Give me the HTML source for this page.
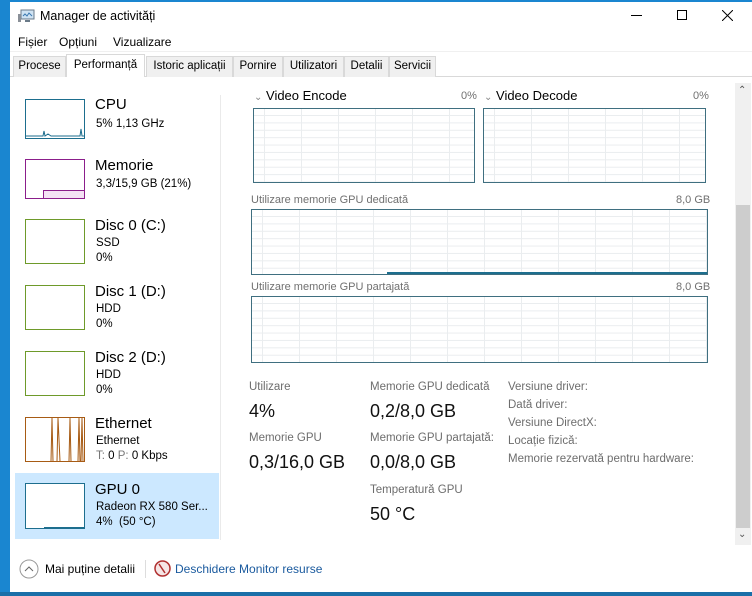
<!DOCTYPE html>
<html><head><meta charset="utf-8"><style>
*{margin:0;padding:0;box-sizing:border-box}
body{width:752px;height:596px;overflow:hidden;background:#1a86d0;font-family:"Liberation Sans",sans-serif;color:#000;position:relative}
.win{position:absolute;left:10px;top:2px;width:742px;height:590px;background:#fff}
.a{position:absolute;white-space:nowrap}
.tab{position:absolute;top:56px;height:21px;background:#f0f0f0;border:1px solid #d9d9d9;border-bottom:none;font-size:11.5px;line-height:19px;text-align:center}
.th{position:absolute;left:25px;width:60px;background:#fff}
.t1{position:absolute;left:95px;font-size:15px}
.t2{position:absolute;left:96px;font-size:11.5px;line-height:16px}
.g{position:absolute;border:1px solid #3f6f80;background-color:#fff;
background-image:linear-gradient(90deg,#eaedef 1px,transparent 1px),linear-gradient(#eaedef 1px,transparent 1px);
background-size:37px 100%,100% 7.4px;background-position:10px 0,0 6px}
.lbl{position:absolute;font-size:11px;color:#707070}
.sl{position:absolute;font-size:11.5px;color:#6d6d6d}
.sv{position:absolute;font-size:18px;color:#111}
</style></head><body>
<div class="win"></div>
<svg class="a" style="left:18px;top:9px" width="17" height="14" viewBox="0 0 17 14"><rect x="3" y="1" width="13" height="9" fill="#cfe3f3" stroke="#6a7a88"/><path d="M5 7l2-2 2 2 2-3 3 3" stroke="#3a78b0" fill="none"/><rect x="0" y="5" width="3" height="8" fill="#8a9098"/><rect x="7" y="11" width="5" height="2" fill="#6a7a88"/></svg>
<div class="a" style="left:40px;top:9px;font-size:12.5px">Manager de activități</div>
<div class="a" style="left:631px;top:15px;width:11px;height:1px;background:#000"></div>
<div class="a" style="left:677px;top:10px;width:10px;height:10px;border:1px solid #000"></div>
<svg class="a" style="left:722px;top:10px" width="11" height="11"><path d="M0 0L11 11M11 0L0 11" stroke="#000"/></svg>
<div class="a" style="left:18px;top:35px;font-size:12px">Fișier</div>
<div class="a" style="left:59px;top:35px;font-size:12px">Opțiuni</div>
<div class="a" style="left:113px;top:35px;font-size:12px">Vizualizare</div>
<div class="a" style="left:10px;top:51px;width:742px;height:1px;background:#f0f0f0"></div>
<div class="a" style="left:10px;top:76px;width:742px;height:1px;background:#d9d9d9"></div>
<div class="tab" style="left:13px;width:53px">Procese</div>
<div class="tab" style="left:66px;top:54px;height:23px;width:79px;background:#fff;line-height:20px">Performanță</div>
<div class="tab" style="left:146px;width:87px">Istoric aplicații</div>
<div class="tab" style="left:233px;width:50px">Pornire</div>
<div class="tab" style="left:283px;width:61px">Utilizatori</div>
<div class="tab" style="left:344px;width:45px">Detalii</div>
<div class="tab" style="left:389px;width:47px">Servicii</div>
<div class="a" style="left:13px;top:77px;width:423px;height:1px;background:#fff"></div>
<div class="a" style="left:220px;top:95px;width:1px;height:445px;background:#eaeaea"></div>
<div class="a" style="left:15px;top:473px;width:204px;height:66px;background:#cce8ff"></div>
<div class="th" style="top:99px;height:40px;border:1px solid #1d6e8e"><svg width="58" height="38" style="position:absolute;left:0;top:0"><path d="M0 36 L17 36 L18 31 L19 36 L22 34 L25 36 L54 36 L55 29 L56 36 L58 36" stroke="#1d6e8e" fill="none"/></svg></div>
<div class="t1" style="top:96px">CPU</div><div class="t2" style="top:116px">5% 1,13 GHz</div>
<div class="th" style="top:159px;height:40px;border:1px solid #8b1e8b"><div style="position:absolute;left:17px;bottom:0;right:0;height:8px;background:#f4e2f4;border-top:1px solid #8b1e8b;border-left:1px solid #8b1e8b"></div></div>
<div class="t1" style="top:157px">Memorie</div><div class="t2" style="top:176px">3,3/15,9 GB (21%)</div>
<div class="th" style="top:219px;height:45px;border:1px solid #6e9a2a"></div>
<div class="t1" style="top:217px">Disc 0 (C:)</div><div class="t2" style="top:235px">SSD</div><div class="t2" style="top:250px">0%</div>
<div class="th" style="top:285px;height:45px;border:1px solid #6e9a2a"></div>
<div class="t1" style="top:283px">Disc 1 (D:)</div><div class="t2" style="top:301px">HDD</div><div class="t2" style="top:316px">0%</div>
<div class="th" style="top:351px;height:45px;border:1px solid #6e9a2a"></div>
<div class="t1" style="top:349px">Disc 2 (D:)</div><div class="t2" style="top:367px">HDD</div><div class="t2" style="top:382px">0%</div>
<div class="th" style="top:417px;height:45px;border:1px solid #a75b14"><svg width="58" height="43" style="position:absolute;left:0;top:0"><path d="M25 43L26 0L27 43M31 43L32 0L34 43M43 43L44 0L45 43M52 43L53 0L54 43M55 43L56 0L57 43" stroke="#a75b14" fill="none"/></svg></div>
<div class="t1" style="top:415px">Ethernet</div><div class="t2" style="top:433px">Ethernet</div><div class="t2" style="top:448px"><span style="color:#777">T:</span> 0 <span style="color:#777">P:</span> 0 Kbps</div>
<div class="th" style="top:483px;height:46px;border:1px solid #1d6e8e"><div style="position:absolute;left:18px;right:0;bottom:0;height:1px;background:#1d6e8e"></div></div>
<div class="t1" style="top:481px">GPU 0</div><div class="t2" style="top:499px">Radeon RX 580 Ser...</div><div class="t2" style="top:514px">4%&nbsp; (50 °C)</div>
<div class="a" style="left:254px;top:88px;font-size:13px"><span style="color:#888;font-size:10px">⌄</span> Video Encode</div>
<div class="lbl" style="left:461px;top:90px">0%</div>
<div class="a" style="left:484px;top:88px;font-size:13px"><span style="color:#888;font-size:10px">⌄</span> Video Decode</div>
<div class="lbl" style="left:693px;top:90px">0%</div>
<div class="g" style="left:253px;top:108px;width:222px;height:75px"></div>
<div class="g" style="left:483px;top:108px;width:223px;height:75px"></div>
<div class="lbl" style="left:251px;top:194px">Utilizare memorie GPU dedicată</div>
<div class="lbl" style="left:676px;top:194px">8,0 GB</div>
<div class="g" style="left:251px;top:209px;width:457px;height:66px"><div style="position:absolute;left:135px;right:0;bottom:0;height:2px;background:#1d6e8e"></div></div>
<div class="lbl" style="left:251px;top:281px">Utilizare memorie GPU partajată</div>
<div class="lbl" style="left:676px;top:281px">8,0 GB</div>
<div class="g" style="left:251px;top:296px;width:457px;height:67px"></div>
<div class="a" style="left:735px;top:83px;width:16px;height:462px;background:#f0f0f0"></div>
<div class="a" style="left:736px;top:205px;width:14px;height:323px;background:#cdcdcd"></div>
<div class="a" style="left:738px;top:85px;font-size:10px;color:#555">⌃</div>
<div class="a" style="left:738px;top:529px;font-size:10px;color:#555">⌄</div>
<div class="sl" style="left:249px;top:381px">Utilizare</div>
<div class="sv" style="left:249px;top:401px">4%</div>
<div class="sl" style="left:249px;top:432px">Memorie GPU</div>
<div class="sv" style="left:249px;top:452px">0,3/16,0 GB</div>
<div class="sl" style="left:370px;top:381px">Memorie GPU dedicată</div>
<div class="sv" style="left:370px;top:401px">0,2/8,0 GB</div>
<div class="sl" style="left:370px;top:432px">Memorie GPU partajată:</div>
<div class="sv" style="left:370px;top:452px">0,0/8,0 GB</div>
<div class="sl" style="left:370px;top:484px">Temperatură GPU</div>
<div class="sv" style="left:370px;top:504px">50 °C</div>
<div class="sl" style="left:508px;top:381px">Versiune driver:</div>
<div class="sl" style="left:508px;top:399px">Dată driver:</div>
<div class="sl" style="left:508px;top:417px">Versiune DirectX:</div>
<div class="sl" style="left:508px;top:435px">Locație fizică:</div>
<div class="sl" style="left:508px;top:453px">Memorie rezervată pentru hardware:</div>
<svg class="a" style="left:19px;top:559px" width="20" height="20"><circle cx="10" cy="10" r="9" fill="#fff" stroke="#999"/><path d="M6 12l4-4 4 4" stroke="#666" fill="none"/></svg>
<div class="a" style="left:45px;top:562px;font-size:12px">Mai puține detalii</div>
<div class="a" style="left:145px;top:560px;width:1px;height:18px;background:#ddd"></div>
<svg class="a" style="left:154px;top:560px" width="17" height="17"><circle cx="8.5" cy="8.5" r="7.5" fill="#f6e6e6" stroke="#b03030" stroke-width="1.5"/><path d="M5 4l6 9" stroke="#b03030" stroke-width="1.5"/></svg>
<div class="a" style="left:175px;top:562px;font-size:12px;color:#1a5a9e">Deschidere Monitor resurse</div>
<div class="a" style="left:0;top:592px;width:752px;height:4px;background:#1a6fa8"></div>
</body></html>
